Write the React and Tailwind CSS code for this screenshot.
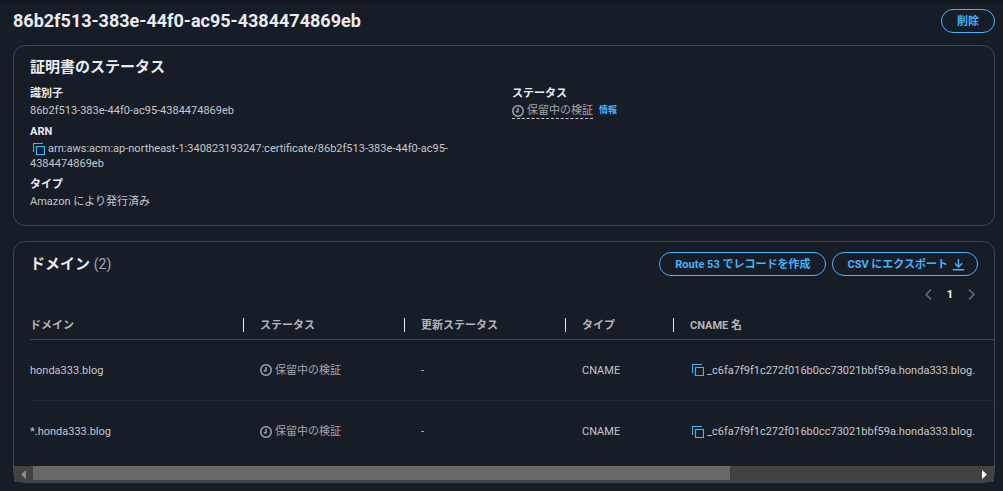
import React, { useRef } from "react";
import clsx from "clsx";

const domains = [
    { name: 'honda333.blog', cname: '_c6fa7f9f1c272f016b0cc73021bbf59a.honda333.blog.' },
    { name: '*.honda333.blog', cname: '_c6fa7f9f1c272f016b0cc73021bbf59a.honda333.blog.' },
];

const CopyIcon = () => (
    <svg viewBox="0 0 12 12" className="block w-3 h-3 shrink-0" fill="none" stroke="#42b4ff" strokeWidth="1.2">
        <path d="M3.500 3.500h8v8h-8z" />
        <path d="M10 .5H.5V9" />
    </svg>
);

const PendingIcon = () => (
    <svg viewBox="0 0 16 16" className="w-3 h-3 shrink-0" fill="none" stroke="currentColor" strokeWidth="2">
        <circle cx="8" cy="8" r="7" />
        <path d="M8 4v5H5" />
    </svg>
);

const DownloadIcon = () => (
    <svg viewBox="0 0 16 16" className="w-[13px] h-[13px] shrink-0" fill="none" stroke="currentColor" strokeWidth="1.8">
        <path d="M8 1v10M3.500 6.500 8 11l4.500-4.500M1 14.500h14" />
    </svg>
);

const Chevron = ({ next }) => (
    <svg viewBox="0 0 16 16" className="block w-[13px] h-[13px]" fill="none" stroke="currentColor" strokeWidth="2">
        <path d={next ? "m5 2 6 6-6 6" : "m11 2-6 6 6 6"} />
    </svg>
);

const Pending = ({ underline }) => (
    <span
        className={clsx(
            "inline-flex items-center gap-[3px] align-middle text-[#a4a4ad]",
            underline && "border-b border-dashed border-[#c6c6cd]"
        )}
    >
        <PendingIcon />
        保留中の検証
    </span>
);

const PillButton = ({ children, className = "px-[15px]" }) => (
    <button
        type="button"
        className={clsx(
            "h-6 shrink-0 rounded-full border border-[#42b4ff] text-[11px] leading-[15px] font-bold text-[#42b4ff] whitespace-nowrap flex items-center gap-1 cursor-pointer",
            className
        )}
    >
        {children}
    </button>
);

const Field = ({ label, children }) => (
    <div>
        <dt className="mb-[2px] font-bold text-[#ebebf0]">{label}</dt>
        <dd className="break-words">{children}</dd>
    </div>
);

const HeadCell = ({ children, last, className }) => (
    <th scope="col" className={clsx("h-[29px] p-0 border-b border-[#424650] text-left font-bold text-[#b4b4bb]", className)}>
        <div className={clsx("flex h-[14px] items-center", !last && "border-r border-[#ebebf0]")}>{children}</div>
    </th>
);

const App = () => {
    const tableRef = useRef(null);

    const scroll = (amount) => {
        tableRef.current.scrollBy({ left: amount, behavior: 'smooth' });
    };

    return (
        <div className="min-h-screen bg-[#161d26] font-['Roboto','Noto_Sans_CJK_JP',sans-serif] text-[11px] leading-[15px] text-[#c6c6cd]">
            <div className="h-[5px] bg-linear-to-b from-[#0f141d] to-[#161d26]" />

            <main className="pl-[13px] pr-2 pb-2">
                <div className="flex items-center justify-between pt-1 pb-3">
                    <h1 className="text-[18px] leading-6 font-bold text-[#ebebf0]">86b2f513-383e-44f0-ac95-4384474869eb</h1>
                    <PillButton>削除</PillButton>
                </div>

                <section className="rounded-xl border border-[#424650] px-4 pt-[11px] pb-4">
                    <h2 className="mb-[9px] text-[15px] leading-5 font-bold text-[#ebebf0]">証明書のステータス</h2>
                    <div className="grid grid-cols-2 gap-4">
                        <dl className="flex flex-col gap-[6px]">
                            <Field label="識別子">86b2f513-383e-44f0-ac95-4384474869eb</Field>
                            <Field label="ARN">
                                <button type="button" aria-label="ARN をコピー" className="ml-[3px] mr-[3px] align-text-bottom cursor-pointer">
                                    <CopyIcon />
                                </button>
                                arn:aws:acm:ap-northeast-1:340823193247:certificate/86b2f513-383e-44f0-ac95-<wbr />4384474869eb
                            </Field>
                            <Field label="タイプ">Amazon により発行済み</Field>
                        </dl>
                        <dl>
                            <Field label="ステータス">
                                <span className="flex items-start gap-[6px]">
                                    <Pending underline />
                                    <a href="#info" className="text-[9px] font-bold text-[#42b4ff]">情報</a>
                                </span>
                            </Field>
                        </dl>
                    </div>
                </section>

                <section className="mt-[15px] rounded-xl border border-[#424650]">
                    <div className="flex items-center justify-between px-4 pt-[10px]">
                        <h2 className="text-[15px] leading-5 font-bold text-[#ebebf0]">
                            ドメイン <span className="text-[14px] font-normal text-[#a4a4ad]">(2)</span>
                        </h2>
                        <div className="flex gap-[6px]">
                            <PillButton>Route 53 でレコードを作成</PillButton>
                            <PillButton className="pl-[14px] pr-3">
                                CSV にエクスポート
                                <DownloadIcon />
                            </PillButton>
                        </div>
                    </div>

                    <nav aria-label="ページ" className="flex items-center justify-end gap-3 px-4 pt-[11px] pb-[9px]">
                        <button type="button" aria-label="前へ" className="text-[#656871]"><Chevron /></button>
                        <button type="button" className="font-bold text-white">1</button>
                        <button type="button" aria-label="次へ" className="text-[#656871]"><Chevron next /></button>
                    </nav>

                    <div ref={tableRef} className="ml-4 overflow-x-auto pb-1 [scrollbar-width:none]">
                        <table className="w-full min-w-[1304px] table-fixed border-separate border-spacing-0">
                            <thead>
                                <tr>
                                    <HeadCell className="w-[214px]">ドメイン</HeadCell>
                                    <HeadCell className="w-[161px]"><span className="pl-4">ステータス</span></HeadCell>
                                    <HeadCell className="w-[161px]"><span className="pl-4">更新ステータス</span></HeadCell>
                                    <HeadCell className="w-[108px]"><span className="pl-4">タイプ</span></HeadCell>
                                    <HeadCell last><span className="pl-4">CNAME 名</span></HeadCell>
                                </tr>
                            </thead>
                            <tbody className="[&>tr:not(:last-child)>td]:border-b [&>tr>td]:border-[#232b37]">
                                {domains.map((domain) => (
                                    <tr key={domain.name}>
                                        <td className="h-[61px] p-0">{domain.name}</td>
                                        <td className="py-0 px-4"><Pending /></td>
                                        <td className="py-0 px-4">-</td>
                                        <td className="py-0 px-4">CNAME</td>
                                        <td className="py-0 pr-4 pl-[18px]">
                                            <div className="flex items-center gap-[3px]">
                                                <button type="button" aria-label="CNAME をコピー" className="cursor-pointer"><CopyIcon /></button>
                                                {domain.cname}
                                            </div>
                                        </td>
                                    </tr>
                                ))}
                            </tbody>
                        </table>
                    </div>

                    {/* horizontal scrollbar */}
                    <div className="flex h-4 bg-[#424242]">
                        <button type="button" aria-label="左へスクロール" className="flex w-[19px] items-center justify-center" onClick={() => scroll(-200)}>
                            <svg viewBox="0 0 5 9" className="w-[5px] h-[9px]" fill="#8b8b8b"><path d="M5 0v9L0 4.500Z" /></svg>
                        </button>
                        <div className="flex-1">
                            <div className="h-[14px] w-[74%] bg-[#686868]" />
                        </div>
                        <button type="button" aria-label="右へスクロール" className="flex w-[19px] items-center justify-center" onClick={() => scroll(200)}>
                            <svg viewBox="0 0 5 9" className="w-[5px] h-[9px]" fill="#ffffff"><path d="M0 0v9l5-4.500Z" /></svg>
                        </button>
                    </div>
                </section>
            </main>
        </div>
    );
};

export default App;
